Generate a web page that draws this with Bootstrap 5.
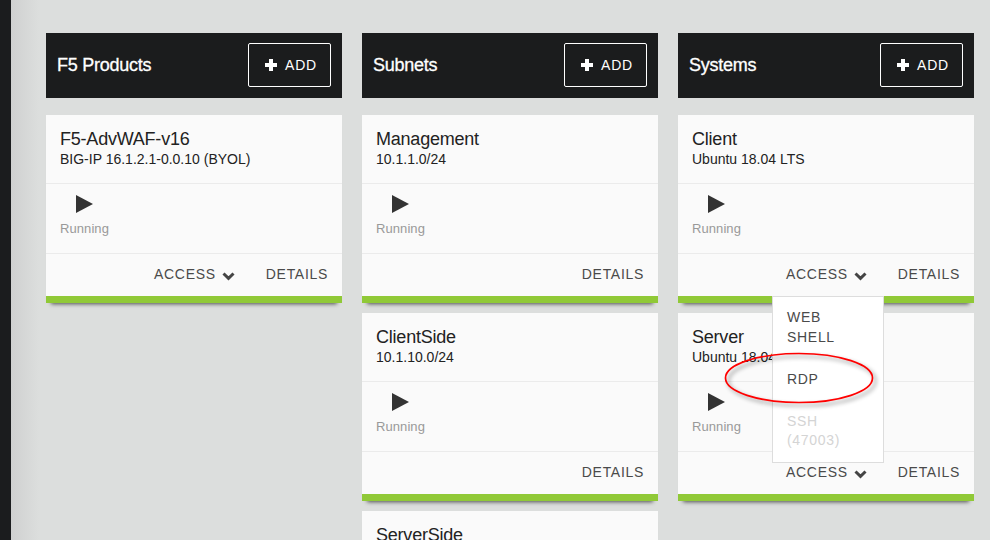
<!DOCTYPE html>
<html lang="en">
<head>
<meta charset="utf-8">
<meta name="viewport" content="width=device-width, initial-scale=1">
<title>Deployment</title>
<link rel="stylesheet" href="https://cdn.jsdelivr.net/npm/bootstrap@5.3.0/dist/css/bootstrap.min.css">
<style>
body{font-family:"Liberation Sans",Arial,sans-serif;background:#dcdedd;color:#222;height:540px}
.rail{width:11px;background:#1b1c1e}
.shade{width:35px;background:linear-gradient(90deg,#cfd0d0,#dcdedd 80%)}
.board{padding-top:33px;gap:20px}
.lane{width:296px}
.lane-head{height:65px;background:#1b1c1d;margin-bottom:17px;padding:0 11px 2px}
.lane-title{font-size:18px;line-height:22px;letter-spacing:-.25px;-webkit-text-stroke:.3px #fff}
.btn-add{width:83px;height:44px;border:1px solid #fff;border-radius:2px;color:#fff;font-size:14px;letter-spacing:.8px;padding:1px 0 0 3px;gap:8px}
.btn-add svg{margin-top:-1px}
.tile{height:188px;background:#fafafa;margin-bottom:10px;border-bottom:7px solid #90c937;box-shadow:0 6px 4px -5px rgba(0,0,0,.65)}
.tile-top{height:69px;padding:13px 14px 0;border-bottom:1px solid #ebebeb}
.tile-name{font-size:18px;line-height:22px;letter-spacing:-.22px}
.tile-sub{font-size:14px;line-height:18px}
.tile-state{height:70px;padding:11px 14px 0;border-bottom:1px solid #ebebeb;color:#999;font-size:13px;line-height:16px;letter-spacing:.08px}
.tile-state svg{margin:0 0 8px 16px}
.tile-foot{height:42px;padding:0 14px}
.act{font-size:14px;line-height:20px;letter-spacing:.7px;color:#4a4a4a;text-decoration:none}
.tile-foot .act{margin-top:-2px}
.chev{margin:3px 31px 0 6px}
.menu{left:94px;top:181px;width:112px;height:167px;background:#fff;border:1px solid #ddd;padding:10px 14px;z-index:2}
.menu .act{display:block;margin-bottom:22px}
.menu .act.off{color:#d4d4d4;line-height:19px;padding-top:1px}
.ring{left:718px;top:346px;z-index:3}
.ring ellipse{filter:drop-shadow(3px 3px 2px rgba(0,0,0,.45))}
</style>
</head>
<body class="overflow-hidden position-relative">
<div class="d-flex h-100 overflow-hidden">
  <aside class="rail flex-shrink-0"></aside>
  <div class="shade flex-shrink-0"></div>
  <main class="board d-flex align-items-start">
    <section class="lane">
      <header class="lane-head d-flex align-items-center justify-content-between">
        <span class="lane-title text-white">F5 Products</span>
        <button class="btn btn-add d-flex align-items-center justify-content-center"><svg width="12" height="12"><path d="M6 0V12M0 6H12" stroke="#fff" stroke-width="4"/></svg>ADD</button>
      </header>
      <article class="tile">
        <div class="tile-top"><div class="tile-name">F5-AdvWAF-v16</div><div class="tile-sub">BIG-IP 16.1.2.1-0.0.10 (BYOL)</div></div>
        <div class="tile-state"><svg class="d-block" width="17" height="18"><path d="M0 0L17 9L0 18Z" fill="#333"/></svg>Running</div>
        <div class="tile-foot d-flex align-items-center justify-content-end">
          <a class="act" href="#">ACCESS</a><svg class="chev" width="13" height="9"><path d="M1.5 1.5L6.5 6.3L11.5 1.5" fill="none" stroke="#444" stroke-width="3"/></svg><a class="act" href="#">DETAILS</a>
        </div>
      </article>
    </section>
    <section class="lane">
      <header class="lane-head d-flex align-items-center justify-content-between">
        <span class="lane-title text-white">Subnets</span>
        <button class="btn btn-add d-flex align-items-center justify-content-center"><svg width="12" height="12"><path d="M6 0V12M0 6H12" stroke="#fff" stroke-width="4"/></svg>ADD</button>
      </header>
      <article class="tile">
        <div class="tile-top"><div class="tile-name">Management</div><div class="tile-sub">10.1.1.0/24</div></div>
        <div class="tile-state"><svg class="d-block" width="17" height="18"><path d="M0 0L17 9L0 18Z" fill="#333"/></svg>Running</div>
        <div class="tile-foot d-flex align-items-center justify-content-end"><a class="act" href="#">DETAILS</a></div>
      </article>
      <article class="tile">
        <div class="tile-top"><div class="tile-name">ClientSide</div><div class="tile-sub">10.1.10.0/24</div></div>
        <div class="tile-state"><svg class="d-block" width="17" height="18"><path d="M0 0L17 9L0 18Z" fill="#333"/></svg>Running</div>
        <div class="tile-foot d-flex align-items-center justify-content-end"><a class="act" href="#">DETAILS</a></div>
      </article>
      <article class="tile">
        <div class="tile-top"><div class="tile-name">ServerSide</div></div>
      </article>
    </section>
    <section class="lane">
      <header class="lane-head d-flex align-items-center justify-content-between">
        <span class="lane-title text-white">Systems</span>
        <button class="btn btn-add d-flex align-items-center justify-content-center"><svg width="12" height="12"><path d="M6 0V12M0 6H12" stroke="#fff" stroke-width="4"/></svg>ADD</button>
      </header>
      <article class="tile position-relative">
        <div class="tile-top"><div class="tile-name">Client</div><div class="tile-sub">Ubuntu 18.04 LTS</div></div>
        <div class="tile-state"><svg class="d-block" width="17" height="18"><path d="M0 0L17 9L0 18Z" fill="#333"/></svg>Running</div>
        <div class="tile-foot d-flex align-items-center justify-content-end">
          <a class="act" href="#">ACCESS</a><svg class="chev" width="13" height="9"><path d="M1.5 1.5L6.5 6.3L11.5 1.5" fill="none" stroke="#444" stroke-width="3"/></svg><a class="act" href="#">DETAILS</a>
        </div>
        <div class="menu position-absolute">
          <a class="act" href="#">WEB SHELL</a>
          <a class="act" href="#">RDP</a>
          <a class="act off" href="#">SSH (47003)</a>
        </div>
      </article>
      <article class="tile">
        <div class="tile-top"><div class="tile-name">Server</div><div class="tile-sub">Ubuntu 18.04 LTS</div></div>
        <div class="tile-state"><svg class="d-block" width="17" height="18"><path d="M0 0L17 9L0 18Z" fill="#333"/></svg>Running</div>
        <div class="tile-foot d-flex align-items-center justify-content-end">
          <a class="act" href="#">ACCESS</a><svg class="chev" width="13" height="9"><path d="M1.5 1.5L6.5 6.3L11.5 1.5" fill="none" stroke="#444" stroke-width="3"/></svg><a class="act" href="#">DETAILS</a>
        </div>
      </article>
    </section>
  </main>
</div>
<svg class="ring position-absolute pe-none" width="164" height="66"><ellipse cx="81" cy="32" rx="73.5" ry="24.5" fill="none" stroke="#f00" stroke-width="1.7"/></svg>
<script src="https://cdn.jsdelivr.net/npm/bootstrap@5.3.0/dist/js/bootstrap.bundle.min.js"></script>
</body>
</html>
